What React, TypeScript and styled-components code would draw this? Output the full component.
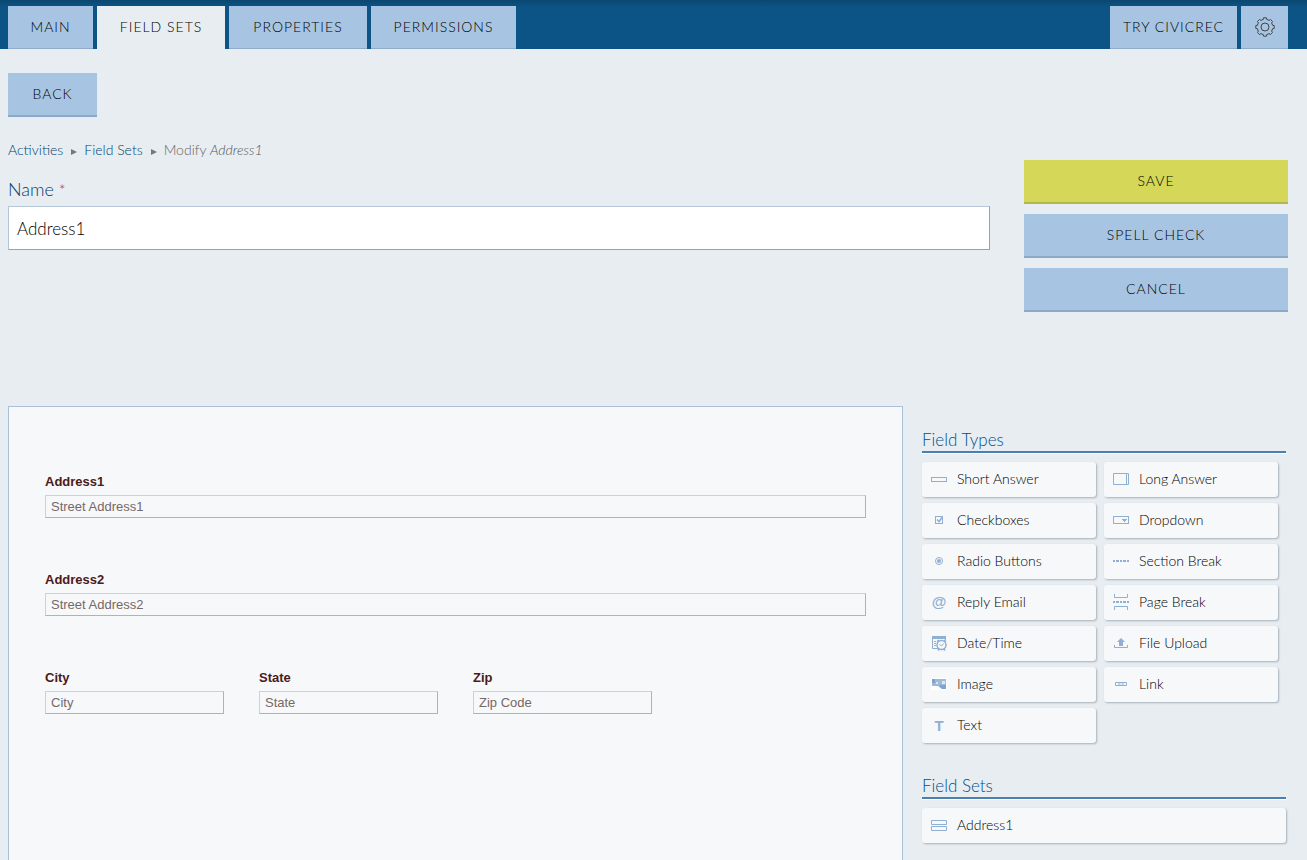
import React from "react";
import styled, { createGlobalStyle, css } from "styled-components";

const sans = '"Lato", "Open Sans", sans-serif';

const GlobalStyle = createGlobalStyle`
  *, *::before, *::after { box-sizing: border-box; }
  body {
    margin: 0;
    background: #e8edf1;
    color: #000;
    font-family: ${sans};
    font-size: 14px;
    font-weight: 300;
  }
  button, input { font: inherit; color: inherit; border-radius: 0; }
`;

const Page = styled.div`
  min-height: 100vh;
  display: flex;
  flex-direction: column;
`;

const TopBar = styled.header`
  display: flex;
  justify-content: space-between;
  height: 49px;
  padding: 6px 19px 0 8px;
  background: linear-gradient(#0a4770 0, #0b5485 7px);
`;

const TabGroup = styled.nav`
  display: flex;
  gap: 4px;
`;

const buttonFace = css`
  display: flex;
  align-items: center;
  justify-content: center;
  border: 0;
  background: #a7c5e3;
  color: #000;
  font-size: 14px;
  line-height: 20px;
  letter-spacing: 1px;
  text-transform: uppercase;
  white-space: nowrap;
  cursor: pointer;
`;

const Tab = styled.button<{ $active?: boolean; $width: number }>`
  ${buttonFace}
  min-width: ${(p) => p.$width}px;
  padding: 0;
  border-bottom: 1px solid #8fabc9;
  ${(p) => p.$active && "background: #e8edf1; border-bottom-color: #e8edf1;"}
`;

const ActionButton = styled.button<{ $primary?: boolean }>`
  ${buttonFace}
  height: 44px;
  padding: 0 24px;
  border-bottom: 2px solid #8ba8c8;
  ${(p) => p.$primary && "background: #d4d757; border-bottom-color: #b3b64a;"}
`;

const BackRow = styled.div`
  display: flex;
  padding: 24px 8px 0;
  & > button { min-width: 89px; }
`;

const Editor = styled.section`
  display: flex;
  gap: 34px;
  min-height: 289px;
  padding: 23px 19px 0 8px;
`;

const EditorMain = styled.div`
  flex: 1;
  min-width: 0;
`;

const EditorActions = styled.div`
  display: flex;
  flex-direction: column;
  gap: 10px;
  width: 264px;
  padding-top: 20px;
`;

const Breadcrumb = styled.nav`
  display: flex;
  align-items: center;
  line-height: 20px;
  color: #666;
  a { color: #003f6e; text-decoration: none; }
  em { color: #555; }
`;

const Arrow = styled.svg`
  width: 6px;
  height: 6px;
  margin: 3px 7px 0 8px;
  fill: #777;
`;

const NameLabel = styled.label`
  display: block;
  margin-top: 17px;
  font-size: 18px;
  line-height: 24px;
  color: #003f6e;
  span { color: #b02020; font-size: 16px; line-height: 16px; }
`;

const NameInput = styled.input`
  display: block;
  width: 100%;
  height: 44px;
  margin-top: 5px;
  padding: 0 8px;
  border: 1px solid;
  border-color: #b4c6d8 #94a3b4 #94a3b4 #b4c6d8;
  background: #fff;
  font-size: 17px;
`;

const Builder = styled.main`
  flex: 1;
  display: flex;
  gap: 19px;
  padding: 0 21px 0 8px;
`;

const Canvas = styled.form`
  flex: 1;
  min-width: 0;
  display: flex;
  flex-direction: column;
  gap: 54px;
  padding: 67px 36px;
  border: 1px solid #a9c0d6;
  border-bottom: 0;
  background: #f7f8fa;
  font-family: "Liberation Sans", Arial, sans-serif;
  font-weight: 400;
`;

const FieldRow = styled.div`
  display: grid;
  grid-template-columns: repeat(4, 1fr);
  column-gap: 35px;
`;

const Field = styled.div<{ $wide?: boolean }>`
  min-width: 0;
  ${(p) => p.$wide && "grid-column: 1 / -1;"}
  label {
    display: block;
    margin-bottom: 5px;
    font-size: 13px;
    line-height: 16px;
    font-weight: bold;
    color: #4b1a1a;
  }
  input {
    display: block;
    width: 100%;
    height: 23px;
    padding: 0 5px;
    border: 1px solid;
    border-color: #c8d2de #a8b4c4 #a8b4c4 #c8d2de;
    background: transparent;
    font-size: 13px;
  }
  input::placeholder { color: #756868; opacity: 1; }
`;

const Palette = styled.aside`
  width: 364px;
  padding-top: 23px;
`;

const PaletteSection = styled.section`
  margin-bottom: 32px;
`;

const PaletteTitle = styled.h2`
  margin: 0 0 8px;
  border-bottom: 2px solid #4a7fb0;
  box-shadow: 0 1px 0 #fff;
  font-size: 17px;
  line-height: 22px;
  font-weight: 300;
  color: #004f8c;
`;

const TypeGrid = styled.div<{ $columns: number }>`
  display: grid;
  grid-template-columns: repeat(${(p) => p.$columns}, 1fr);
  gap: 6px 8px;
  padding: 1px ${(p) => (p.$columns > 1 ? 8 : 0)}px 0 0;
`;

const TypeCard = styled.button`
  display: flex;
  align-items: flex-start;
  gap: 10px;
  height: 35px;
  padding: 7px 9px 0;
  border: 0;
  border-radius: 3px;
  background: #f7f8fa;
  box-shadow: 1px 1px 2px rgba(90, 105, 120, 0.45);
  font-size: 14px;
  line-height: 20px;
  text-align: left;
  cursor: pointer;
`;

const Icon = styled.svg`
  flex: none;
  width: 16px;
  height: 17px;
  margin-top: 2px;
  fill: none;
  stroke: #8fb0d3;
  overflow: visible;
`;

const IconText = styled.text`
  fill: #8fb0d3;
  stroke: none;
  font: bold 15px "Liberation Sans", Arial, sans-serif;
  text-anchor: middle;
`;

const dashes = "M0 8h2M3 8h3M7 8h2M10 8h3M14 8h2";

const icons: Record<string, React.ReactNode> = {
  short: <rect x="0.5" y="6.5" width="15" height="4" />,
  long: <path d="M.5 2.5h15v11H.5zM13.5 2.5v11" />,
  check: (
    <>
      <rect x="4.5" y="4.5" width="7" height="7" />
      <path d="M6 7.5l2 2L11.5 5" strokeWidth="1.5" />
    </>
  ),
  dropdown: (
    <>
      <rect x="0.5" y="4.5" width="15" height="7" />
      <path d="M9 7h5v1h-1v1h-1v1h-1V9h-1V8H9z" fill="#8fb0d3" stroke="none" />
    </>
  ),
  radio: (
    <>
      <circle cx="8" cy="8" r="3.5" />
      <circle cx="8" cy="8" r="2" fill="#8fb0d3" stroke="none" />
    </>
  ),
  section: <path d={dashes} strokeWidth="2" />,
  email: <IconText x="8" y="13">@</IconText>,
  page: (
    <>
      <path d="M1.5 0v3.5h13V0M1.5 16v-3.5h13V16" />
      <path d={dashes} strokeWidth="2" />
    </>
  ),
  date: (
    <>
      <path d="M1 2.5h14" strokeWidth="3" />
      <path d="M1.5 3v10.5H7M14.5 3v2M3 6.5h2M3 8.5h2M3 10.5h2" />
      <circle cx="10.5" cy="10" r="4.5" fill="#f7f8fa" strokeWidth="1.5" />
      <path d="M8.5 9.5l2 1.5 2-2.5" />
      <path d="M7 15.5l1-1.5M14 15.5L13 14M6 6.5L8 5M15 6.5L13 5" strokeWidth="1.5" />
    </>
  ),
  upload: (
    <>
      <path d="M1.5 10v2.5h13V10" />
      <path d="M8 3l4 4h-2v4H6V7H4z" fill="#8fb0d3" stroke="none" />
    </>
  ),
  image: (
    <g stroke="none">
      <path d="M0 2h16v12H0z" fill="#fff" />
      <path d="M1 3h14v10h-4L7 10H1z" fill="#9dbad9" />
      <path d="M1 3h3v4H1zM9 9h6v4h-4l-3-3z" fill="#7fa4cb" />
      <path d="M5 6h2v2H5zM11 5h3v3h-3z" fill="#dce7f2" />
    </g>
  ),
  link: <path d="M2.5 6.5h11v3h-11zM6.5 6.5v1M6.5 8.5v1M9.5 6.5v1M9.5 8.5v1M5 8h1M7.5 8h1M10 8h1" />,
  text: <IconText x="8" y="14">T</IconText>,
  fieldset: <path d="M.5 3.5h15v4H.5zM.5 9.5h15v4H.5z" />,
};

const fieldTypes = [
  ["short", "Short Answer"],
  ["long", "Long Answer"],
  ["check", "Checkboxes"],
  ["dropdown", "Dropdown"],
  ["radio", "Radio Buttons"],
  ["section", "Section Break"],
  ["email", "Reply Email"],
  ["page", "Page Break"],
  ["date", "Date/Time"],
  ["upload", "File Upload"],
  ["image", "Image"],
  ["link", "Link"],
  ["text", "Text"],
];

const formRows = [
  [{ id: "address1", label: "Address1", hint: "Street Address1", wide: true }],
  [{ id: "address2", label: "Address2", hint: "Street Address2", wide: true }],
  [
    { id: "city", label: "City", hint: "City", wide: false },
    { id: "state", label: "State", hint: "State", wide: false },
    { id: "zip", label: "Zip", hint: "Zip Code", wide: false },
  ],
];

// Eight rounded teeth around the hub.
const gearPath = (() => {
  const at = (r: number, deg: number) => {
    const a = (deg * Math.PI) / 180;
    return `${(10 + r * Math.cos(a)).toFixed(2)} ${(10 + r * Math.sin(a)).toFixed(2)}`;
  };
  let d = `M${at(9.3, -9)}`;
  for (let i = 0; i < 8; i++) {
    const c = i * 45;
    d += `L${at(9.3, c + 9)}Q${at(6.8, c + 12)} ${at(7.8, c + 22.5)}Q${at(6.8, c + 33)} ${at(9.3, c + 36)}`;
  }
  return d + "Z";
})();

const Gear = () => (
  <svg width="20" height="20" viewBox="0 0 20 20" fill="none" stroke="#444" aria-hidden="true">
    <path d={gearPath} strokeLinejoin="round" />
    <circle cx="10" cy="10" r="4" />
  </svg>
);

const Separator = () => (
  <Arrow viewBox="0 0 6 6" aria-hidden="true">
    <path d="M0 0l6 3-6 3z" />
  </Arrow>
);

const TypeButton = ({ icon, label }: { icon: string; label: string }) => (
  <TypeCard type="button">
    <Icon viewBox="0 0 16 17" aria-hidden="true">{icons[icon]}</Icon>
    {label}
  </TypeCard>
);

export default function App() {
  return (
    <Page>
      <GlobalStyle />
      <TopBar>
        <TabGroup>
          <Tab $width={85}>Main</Tab>
          <Tab $width={128} $active>Field Sets</Tab>
          <Tab $width={138}>Properties</Tab>
          <Tab $width={145}>Permissions</Tab>
        </TabGroup>
        <TabGroup>
          <Tab $width={127}>Try CivicRec</Tab>
          <Tab $width={47} aria-label="Settings"><Gear /></Tab>
        </TabGroup>
      </TopBar>
      <BackRow>
        <ActionButton type="button">Back</ActionButton>
      </BackRow>
      <Editor>
        <EditorMain>
          <Breadcrumb aria-label="Breadcrumb">
            <a href="#activities">Activities</a>
            <Separator />
            <a href="#field-sets">Field Sets</a>
            <Separator />
            <span>Modify <em>Address1</em></span>
          </Breadcrumb>
          <NameLabel htmlFor="name">Name <span>*</span></NameLabel>
          <NameInput id="name" defaultValue="Address1" />
        </EditorMain>
        <EditorActions>
          <ActionButton type="button" $primary>Save</ActionButton>
          <ActionButton type="button">Spell Check</ActionButton>
          <ActionButton type="button">Cancel</ActionButton>
        </EditorActions>
      </Editor>
      <Builder>
        <Canvas>
          {formRows.map((row) => (
            <FieldRow key={row[0].id}>
              {row.map((f) => (
                <Field key={f.id} $wide={f.wide}>
                  <label htmlFor={f.id}>{f.label}</label>
                  <input id={f.id} placeholder={f.hint} />
                </Field>
              ))}
            </FieldRow>
          ))}
        </Canvas>
        <Palette>
          <PaletteSection>
            <PaletteTitle>Field Types</PaletteTitle>
            <TypeGrid $columns={2}>
              {fieldTypes.map(([icon, label]) => (
                <TypeButton key={icon} icon={icon} label={label} />
              ))}
            </TypeGrid>
          </PaletteSection>
          <PaletteSection>
            <PaletteTitle>Field Sets</PaletteTitle>
            <TypeGrid $columns={1}>
              <TypeButton icon="fieldset" label="Address1" />
            </TypeGrid>
          </PaletteSection>
        </Palette>
      </Builder>
    </Page>
  );
}
